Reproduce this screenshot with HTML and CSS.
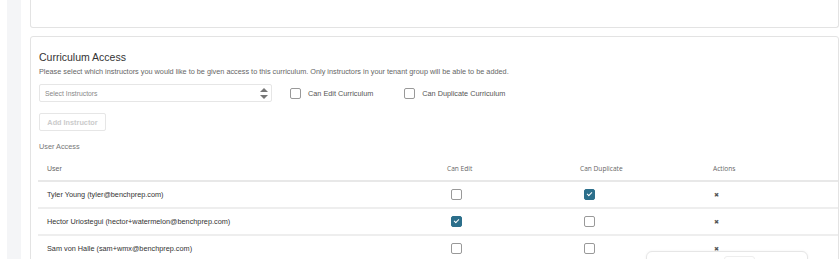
FILE: index.html
```html
<!DOCTYPE html>
<html lang="en">
<head>
  <meta charset="UTF-8" />
  <title>Curriculum Access</title>
  <link rel="stylesheet" href="styles.css">
</head>
<body>
  <div class="shell">
    <div class="rail"></div>
    <div class="main">
      <div class="card card-top"></div>

      <div class="card access">
        <h2 class="title">Curriculum Access</h2>
        <p class="desc">Please select which instructors you would like to be given access to this curriculum. Only instructors in your tenant group will be able to be added.</p>

        <div class="picker-row">
          <div class="select">
            <span class="placeholder">Select Instructors</span>
            <span class="spinner">
              <span class="arrow-up"></span>
              <span class="arrow-down"></span>
            </span>
          </div>
          <label class="opt"><span class="box"></span>Can Edit Curriculum</label>
          <label class="opt"><span class="box"></span>Can Duplicate Curriculum</label>
        </div>

        <button class="add-btn">Add Instructor</button>

        <div class="section-label">User Access</div>

        <table class="users">
          <thead>
            <tr>
              <th class="col-user">User</th>
              <th class="alt">Can Edit</th>
              <th class="alt">Can Duplicate</th>
              <th class="alt">Actions</th>
            </tr>
          </thead>
          <tbody>
            <tr>
              <td>Tyler Young (tyler@benchprep.com)</td>
              <td><span class="box"></span></td>
              <td><span class="box checked"></span></td>
              <td><span class="remove">&#10006;</span></td>
            </tr>
            <tr>
              <td>Hector Uriostegui (hector+watermelon@benchprep.com)</td>
              <td><span class="box checked"></span></td>
              <td><span class="box"></span></td>
              <td><span class="remove">&#10006;</span></td>
            </tr>
            <tr>
              <td>Sam von Halle (sam+wmx@benchprep.com)</td>
              <td><span class="box"></span></td>
              <td><span class="box"></span></td>
              <td><span class="remove">&#10006;</span></td>
            </tr>
          </tbody>
        </table>
      </div>
    </div>
  </div>

  <!-- toast peeking in from the bottom -->
  <div class="toast"><span class="toast-btn"></span></div>
</body>
</html>
```

FILE: styles.css
```css
body {
  margin: 0;
  background: #fff;
  font-family: "Liberation Sans", Arial, sans-serif;
  color: #333;
  overflow: hidden;
}

.shell {
  display: flex;
  height: 259px;
}

.rail {
  width: 14px;
  margin-left: 7px;
  background: #f4f5f7;
}

.main {
  flex: 1;
  padding-left: 9px;
  padding-right: 1px;
}

.card {
  border: 1px solid #e3e3e3;
  border-radius: 3px;
  background: #fff;
}

.card-top {
  height: 27px;
  border-top: none;
  border-radius: 0 0 3px 3px;
  margin-bottom: 8px;
}

.access {
  padding: 13px 0 0 8px;
}

.title {
  margin: 0;
  font-size: 10.5px;
  font-weight: normal;
  color: #333;
  line-height: 15px;
}

.desc {
  margin: 1px 0 0;
  font-size: 7.3px;
  color: #666;
  line-height: 11px;
}

.picker-row {
  display: flex;
  align-items: center;
  margin-top: 7px;
  height: 18px;
}

.select {
  height: 16px;
  border: 1px solid #e6e6e6;
  border-radius: 2px;
  display: flex;
  align-items: center;
  justify-content: space-between;
  padding: 0 2px 0 5px;
  width: 224px;
}

.placeholder {
  font-size: 6.8px;
  color: #888;
}

.spinner {
  display: flex;
  flex-direction: column;
  gap: 3px;
  margin-right: 1px;
}

.arrow-up,
.arrow-down {
  width: 0;
  height: 0;
  border-left: 4px solid transparent;
  border-right: 4px solid transparent;
}

.arrow-up {
  border-bottom: 4px solid #777;
}

.arrow-down {
  border-top: 4px solid #777;
}

.opt {
  display: flex;
  align-items: center;
  font-size: 7.3px;
  color: #555;
  gap: 7px;
}

.picker-row .opt:first-of-type {
  margin-left: 18px;
}

.picker-row .opt + .opt {
  margin-left: 31px;
}

.box {
  display: inline-block;
  width: 9px;
  height: 9px;
  border: 1px solid #999;
  border-radius: 2px;
  background: #fff;
  vertical-align: middle;
  position: relative;
}

.box.checked {
  background: #2c6f8b;
  border-color: #2c6f8b;
}

.box.checked::after {
  content: "";
  position: absolute;
  left: 3px;
  top: 1px;
  width: 2px;
  height: 4px;
  border: solid #fff;
  border-width: 0 1px 1px 0;
  transform: rotate(45deg);
}

.add-btn {
  display: block;
  margin-top: 11px;
  width: 67px;
  height: 18px;
  padding: 0;
  border: 1px solid #e6e6e6;
  border-radius: 2px;
  background: #fff;
  font-family: "Liberation Sans", Arial, sans-serif;
  font-size: 7.3px;
  font-weight: bold;
  color: #cbcbcb;
}

.section-label {
  margin-top: 11px;
  font-size: 7.3px;
  color: #777;
  line-height: 10px;
}

.users {
  width: 800px;
  margin-left: -1px;
  border-collapse: collapse;
  margin-top: 4px;
}

.users th {
  text-align: left;
  font-weight: normal;
  font-size: 7px;
  color: #666;
  height: 24px;
  padding: 0 0 0 9px;
  border-bottom: 2px solid #e8e8e8;
}

.users th.alt {
  font-family: "Open Sans", sans-serif;
  font-size: 6.6px;
}

.users th.col-user {
  width: 391px;
}

.users th:nth-child(2),
.users th:nth-child(3) {
  width: 124px;
}

.users td {
  height: 25px;
  padding: 0 0 0 9px;
  font-size: 7.3px;
  color: #333;
  border-bottom: 2px solid #eeeeee;
}

.users td:nth-child(2) .box,
.users td:nth-child(3) .box {
  margin-left: 4px;
}

.users tbody tr:last-child td {
  border-bottom: none;
}

.remove {
  font-family: "DejaVu Sans", sans-serif;
  font-size: 6px;
  color: #555;
  margin-left: 1px;
}

.toast {
  position: absolute;
  left: 646px;
  top: 251px;
  width: 160px;
  height: 30px;
  border: 1px solid #e6e6e6;
  border-radius: 6px;
  background: #fff;
  box-shadow: 0 0 3px rgba(0, 0, 0, 0.05);
}

.toast-btn {
  position: absolute;
  left: 77px;
  top: 4px;
  width: 29px;
  height: 20px;
  border: 1px solid #eee;
  border-radius: 3px;
}
```
